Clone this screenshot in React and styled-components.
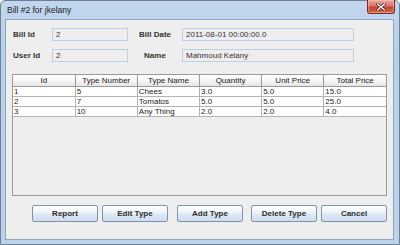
import React from "react";
import styled, { createGlobalStyle } from "styled-components";

const GlobalStyle = createGlobalStyle`
  html, body {
    margin: 0;
    padding: 0;
    background: #ffffff;
  }
  body {
    font-family: "Liberation Sans", Arial, sans-serif;
  }
`;

const columns = ["Id", "Type Number", "Type Name", "Quantity", "Unit Price", "Total Price"];

const rows = [
  ["1", "5", "Chees", "3.0", "5.0", "15.0"],
  ["2", "7", "Tomatos", "5.0", "5.0", "25.0"],
  ["3", "10", "Any Thing", "2.0", "2.0", "4.0"],
];

const buttons = [
  { label: "Report", gap: 0 },
  { label: "Edit Type", gap: 4 },
  { label: "Add Type", gap: 9 },
  { label: "Delete Type", gap: 8 },
  { label: "Cancel", gap: 4 },
];

const App = () => {
  return (
    <>
      <GlobalStyle />
      <Window>
        <TitleBar>
          <Title>Bill #2 for jkelany</Title>
          <CloseButton>
            <svg width="10" height="8" viewBox="0 0 10 8">
              <path d="M1.5 1 L8.5 7 M8.5 1 L1.5 7" stroke="#4a1a14" strokeWidth="2.6" strokeLinecap="square" />
              <path d="M1.5 1 L8.5 7 M8.5 1 L1.5 7" stroke="#ffffff" strokeWidth="1.4" strokeLinecap="square" />
            </svg>
          </CloseButton>
        </TitleBar>

        <Content>
          <Form>
            <Label>Bill Id</Label>
            <Field>2</Field>
            <Label $center>Bill Date</Label>
            <Field>2011-08-01 00:00:00.0</Field>
            <Label>User Id</Label>
            <Field>2</Field>
            <Label $center>Name</Label>
            <Field>Mahmoud Kelany</Field>
          </Form>

          <ScrollPane>
            <Table>
              <thead>
                <tr>
                  {columns.map((c) => (
                    <HeaderCell key={c}>{c}</HeaderCell>
                  ))}
                </tr>
              </thead>
              <tbody>
                {rows.map((r) => (
                  <tr key={r[0]}>
                    {r.map((v, i) => (
                      <Cell key={i}>{v}</Cell>
                    ))}
                  </tr>
                ))}
              </tbody>
            </Table>
          </ScrollPane>

          <ButtonRow>
            {buttons.map((b) => (
              <Button key={b.label} $gap={b.gap}>
                {b.label}
              </Button>
            ))}
          </ButtonRow>
        </Content>
      </Window>
    </>
  );
};

export default App;

const Window = styled.div`
  width: 400px;
  height: 245px;
  box-sizing: border-box;
  display: flex;
  flex-direction: column;
  border: 1px solid #6f7f93;
  border-radius: 5px 5px 0 0;
  background: linear-gradient(to bottom, #c2d7ee 0%, #b9d0ea 20%, #bdd3ea 100%);
  padding: 0 5px 4px 4px;
`;

const TitleBar = styled.div`
  height: 18px;
  display: flex;
  align-items: flex-start;
  justify-content: space-between;
`;

const Title = styled.div`
  font-size: 8.5px;
  color: #1b1b1b;
  padding: 4px 0 0 2px;
`;

const CloseButton = styled.div`
  width: 28px;
  height: 14px;
  margin-top: -1px;
  margin-right: -1px;
  box-sizing: border-box;
  display: flex;
  align-items: center;
  justify-content: center;
  border: 1px solid #7c2a20;
  border-top: none;
  border-radius: 0 0 3px 3px;
  background: linear-gradient(to bottom, #e8a89c 0%, #d7766a 45%, #c24534 55%, #cf6a4e 100%);
  box-shadow: inset 0 0 0 1px rgba(255, 210, 200, 0.45);
`;

const Content = styled.div`
  flex: 1;
  display: flex;
  flex-direction: column;
  background: #eeeeee;
  border: 1px solid #8fa4bd;
  padding: 8px 6px 0 6px;
`;

const Form = styled.div`
  display: grid;
  grid-template-columns: 39px 76px 54px 172px;
  grid-auto-rows: 13px;
  row-gap: 8px;
  align-items: center;
  padding-left: 1px;
`;

const Label = styled.div`
  font-size: 8px;
  font-weight: bold;
  color: #333333;
  text-align: ${(p) => (p.$center ? "center" : "left")};
`;

const Field = styled.div`
  height: 13px;
  box-sizing: border-box;
  border: 1px solid #bccfe3;
  background: #eeeeee;
  font-size: 8px;
  color: #333333;
  padding: 1px 0 0 3px;
  line-height: 10px;
`;

const ScrollPane = styled.div`
  margin-top: 12px;
  height: 122px;
  box-sizing: border-box;
  border: 1px solid #9a9a9a;
  background: #eeeeee;
`;

const Table = styled.table`
  width: 100%;
  border-collapse: collapse;
  table-layout: fixed;
  font-size: 8px;
  color: #222222;
`;

const HeaderCell = styled.th`
  height: 11px;
  padding: 0;
  font-weight: normal;
  text-align: center;
  line-height: 10px;
  background: linear-gradient(to bottom, #ffffff 0%, #f3f3f3 60%, #e6e6e6 100%);
  border-right: 1px solid #9a9a9a;
  border-bottom: 1px solid #9a9a9a;
  &:last-child {
    border-right: none;
  }
`;

const Cell = styled.td`
  height: 9px;
  padding: 0 0 0 1px;
  line-height: 9px;
  background: #ffffff;
  border-right: 1px solid #b4b4b4;
  border-bottom: 1px solid #b4b4b4;
  white-space: nowrap;
  overflow: hidden;
  &:last-child {
    border-right: none;
  }
`;

const ButtonRow = styled.div`
  display: flex;
  margin-top: 9px;
  padding-left: 20px;
`;

const Button = styled.div`
  width: 66px;
  height: 17px;
  box-sizing: border-box;
  margin-left: ${(p) => p.$gap}px;
  display: flex;
  align-items: center;
  justify-content: center;
  border: 1px solid #7e93ae;
  border-radius: 2px;
  background: linear-gradient(to bottom, #ffffff 0%, #eef3fa 45%, #dde7f4 55%, #d0ddee 100%);
  font-size: 8px;
  font-weight: bold;
  color: #2c2c2c;
`;
